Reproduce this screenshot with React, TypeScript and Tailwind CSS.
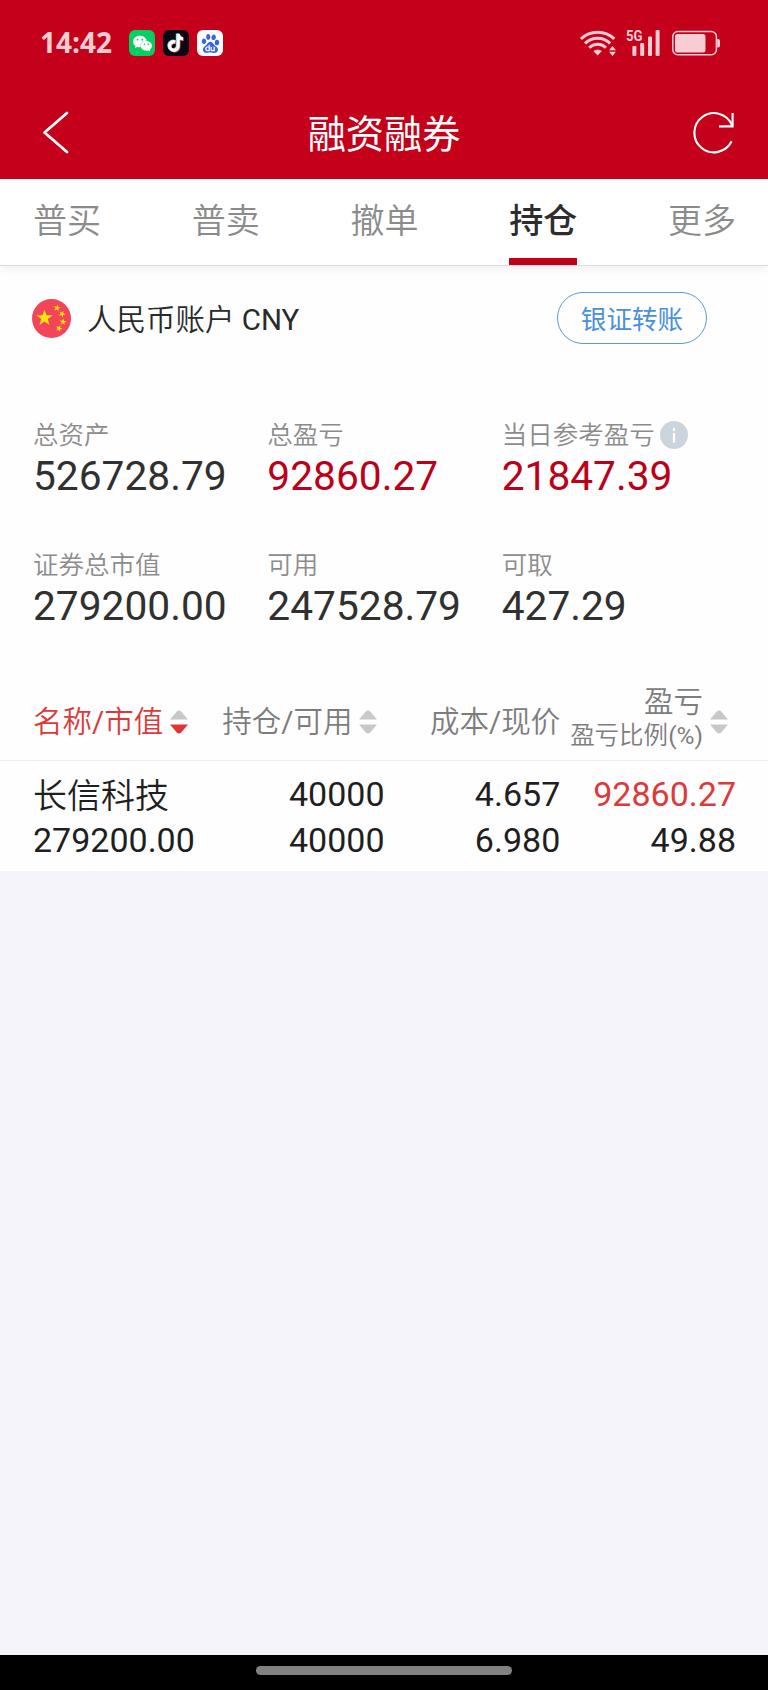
import React from 'react';
import { SiBaidu, SiWechat } from 'react-icons/si';

const tabs = ['普买', '普卖', '撤单', '持仓', '更多'];
const activeTab = '持仓';

const summary = [
  { label: '总资产', value: '526728.79' },
  { label: '总盈亏', value: '92860.27', gain: true },
  { label: '当日参考盈亏', value: '21847.39', gain: true, info: true },
  { label: '证券总市值', value: '279200.00' },
  { label: '可用', value: '247528.79' },
  { label: '可取', value: '427.29' },
];

function StatusBar() {
  const note = 'M12.400 12a4.300 4.300 0 1 0 2.800 4.200V4c.3 2.900 2.100 4.700 4.900 4.900';
  return (
    <div className="flex h-[86px] items-center pl-[40px] pr-[48px] text-[#f8ccd3]">
      <span className="w-[89px] pb-[2px] font-['Open_Sans'] text-[28px] leading-[40px] font-bold">14:42</span>
      <div className="flex gap-2">
        <span className="flex size-[26px] items-center justify-center rounded-[6px] bg-[#05cf62] text-white">
          <SiWechat size={19} />
        </span>
        <span className="flex size-[26px] items-center justify-center rounded-[6px] bg-[#0b0712]">
          <svg viewBox="0 0 26 26" className="size-[26px]">
            <g fill="none" strokeWidth="3.200">
              <path d={note} stroke="#3fe8e4" transform="translate(-.8 -.5)" />
              <path d={note} stroke="#f5365f" transform="translate(.7 .6)" />
              <path d={note} stroke="#fff" />
            </g>
          </svg>
        </span>
        <span className="flex size-[26px] items-center justify-center rounded-[6px] bg-white text-[#3566e0]">
          <SiBaidu size={19} />
        </span>
      </div>
      <svg viewBox="0 0 36 26" className="ml-auto h-[26px] w-[36px]">
        <g fill="none" stroke="currentColor" strokeWidth="3">
          <path d="M.9 8.900a24 24 0 0 1 33.400 0" />
          <path d="M5 13.400a18 18 0 0 1 25.200 0" />
          <path d="M9.200 17.700a12 12 0 0 1 16.800 0" />
        </g>
        <path d="M13.300 21q4.300-3.200 8.600 0l-4.300 4.500z" fill="currentColor" />
        <path d="M29 20.200l3.500-4.200 3.500 4.200zM29 21.800h7l-3.500 4.200z" fill="currentColor" />
      </svg>
      <div className="relative ml-[10px] h-[26px] w-[34px]">
        <span className="absolute top-[-1px] left-0 origin-left scale-x-[.85] font-['Roboto'] text-[15.500px] leading-[14px] font-bold">5G</span>
        <svg viewBox="0 0 34 26" className="size-full" fill="currentColor">
          <rect x="6.400" y="16" width="4" height="10" rx="1" />
          <rect x="14.200" y="13" width="4" height="13" rx="1" />
          <rect x="22" y="6.500" width="4" height="19.500" rx="1" />
          <rect x="29.600" y="0" width="4" height="26" rx="1" />
        </svg>
      </div>
      <svg viewBox="0 0 48 26" className="ml-[12px] h-[26px] w-[48px]">
        <rect x=".8" y="1.600" width="43.600" height="23.200" rx="5" fill="none" stroke="currentColor" strokeWidth="1.500" />
        <rect x="3" y="4" width="30.500" height="18.400" rx="2.500" fill="currentColor" />
        <path d="M45.200 9h.8q2 0 2 2v4.500q0 2-2 2h-.8z" fill="currentColor" />
      </svg>
    </div>
  );
}

function TitleBar() {
  return (
    <div className="flex h-[93px] items-center justify-between pr-[33px] pl-[42px] text-white">
      <svg viewBox="0 0 27 44" className="h-[44px] w-[27px]" fill="none" stroke="currentColor" strokeWidth="2.800" strokeLinecap="round" strokeLinejoin="round">
        <path d="M25 2L2.500 21.500 25 41" />
      </svg>
      <h1 className="ml-[8px] pt-[4px] text-[38.200px] leading-[48px] font-normal">融资融券</h1>
      <svg viewBox="0 0 44 44" className="size-[44px]" fill="none" stroke="currentColor" strokeWidth="2.100">
        <path d="M41.200 14.500A19.600 19.600 0 1 0 40.600 30.300" />
        <path d="M41.600 2v13.400H28" />
      </svg>
    </div>
  );
}

function Tabs() {
  return (
    <nav className="relative flex h-[87px] justify-between border-b border-[#dcdcdc] bg-white pr-[32px] pl-[33px] text-[34px] shadow-[0_3px_8px_rgba(0,0,0,0.06)]">
      {tabs.map((tab) =>
        tab === activeTab ? (
          <button key={tab} className="h-[86px] border-b-[7px] border-[#c1001a] leading-[84px] font-medium text-[#2d2d2d]">
            <span className="block h-[79px]">{tab}</span>
          </button>
        ) : (
          <button key={tab} className="h-[86px] leading-[84px] font-[350] text-[#8b8b8b]">
            <span className="block h-[86px]">{tab}</span>
          </button>
        ),
      )}
    </nav>
  );
}

function Flag() {
  const star = 'M0-10L2.350-3.240 9.510-3.090 3.800 1.240 5.880 8.090 0 4 -5.880 8.090 -3.800 1.240 -9.510-3.090 -2.350-3.240z';
  return (
    <svg viewBox="0 0 39 39" className="size-[39px]">
      <circle cx="19.500" cy="19.500" r="19.500" fill="#f2455a" />
      <g fill="#ffe40d">
        <path d={star} transform="translate(12.500 19) scale(.86)" />
        <path d={star} transform="translate(25 9) scale(.36) rotate(12)" />
        <path d={star} transform="translate(30 15) scale(.36) rotate(25)" />
        <path d={star} transform="translate(31 23) scale(.36) rotate(5)" />
        <path d={star} transform="translate(27 29.500) scale(.36) rotate(20)" />
      </g>
    </svg>
  );
}

function SortArrows({ descending = false }: { descending?: boolean }) {
  return (
    <svg viewBox="0 0 18 24" className="h-[24px] w-[18px] shrink-0">
      <path d="M0 9.500L7 1.200Q9-.4 11 1.200L18 9.500z" fill="#c8c8c8" />
      <path d="M0 14.500h18l-7 8.300Q9 24.400 7 22.800z" fill={descending ? '#e43333' : '#c8c8c8'} />
    </svg>
  );
}

function Account() {
  return (
    <section className="flex h-[104px] items-center pr-[61px] pl-[32px]">
      <Flag />
      <span className="ml-[16px] pt-[4px] text-[29.500px] leading-[40px] font-[350] text-[#2a2a2a]">
        人民币账户 <span className="font-normal">CNY</span>
      </span>
      <button className="ml-auto h-[52px] w-[150px] rounded-full border-[1.500px] border-[#5b9bd3] pt-[3px] text-[25.600px] leading-[46px] text-[#4a90d9]">银证转账</button>
    </section>
  );
}

function Summary() {
  return (
    <section className="grid h-[300px] auto-rows-[130px] grid-cols-3 pt-[47px] pr-[32px] pl-[33px]">
      {summary.map((item) => (
        <div key={item.label}>
          <div className="flex h-[36px] items-center gap-[5px] text-[25.500px] leading-[36px] font-[350] text-[#8c8c8c]">
            {item.label}
            {item.info && (
              <svg viewBox="0 0 28 28" className="size-[28px]">
                <circle cx="14" cy="14" r="14" fill="#ccd5dc" />
                <path d="M14 7v3M14 12v9.500" stroke="#fff" strokeWidth="2.200" />
              </svg>
            )}
          </div>
          <div className={item.gain ? 'text-[40.700px] leading-[46px] text-[#bd0019]' : 'text-[40.700px] leading-[46px] text-[#303030]'}>{item.value}</div>
        </div>
      ))}
    </section>
  );
}

function PairLabel({ first, second }: { first: string; second: string }) {
  return (
    <span>
      {first}
      <span className="font-normal">/</span>
      {second}
    </span>
  );
}

function Holdings() {
  return (
    <section>
      <div className="grid h-[91px] grid-cols-4 border-b border-[#ececec] pt-[13px] pr-[32px] pl-[33px] text-[29.500px] leading-[36px] font-[350] whitespace-nowrap text-[#7d7d7d]">
        <div className="flex items-center gap-[7px] text-[#dc3a3a]">
          <PairLabel first="名称" second="市值" />
          <SortArrows descending />
        </div>
        <div className="flex items-center justify-end gap-[6px] pr-[8px]">
          <PairLabel first="持仓" second="可用" />
          <SortArrows />
        </div>
        <div className="flex items-center justify-end">
          <PairLabel first="成本" second="现价" />
        </div>
        <div className="flex items-center justify-end gap-[7px] pr-[8px]">
          <div className="-mt-[6px] text-right">
            <div className="leading-[34px]">盈亏</div>
            <div className="text-[24.500px] leading-[33px]">
              盈亏比例<span className="font-normal">(%)</span>
            </div>
          </div>
          <SortArrows />
        </div>
      </div>
      <div className="grid h-[110px] grid-cols-4 content-start pt-[10px] pr-[32px] pl-[33px] text-right text-[34px] leading-[46px] text-[#1f1f1f]">
        <div className="h-[46px] text-left leading-[50px] font-[350]">长信科技</div>
        <div>40000</div>
        <div>4.657</div>
        <div className="text-[#dc3a3a]">92860.27</div>
        <div className="text-left">279200.00</div>
        <div>40000</div>
        <div>6.980</div>
        <div>49.88</div>
      </div>
    </section>
  );
}

export default function App() {
  return (
    <div className="flex h-[1690px] w-[768px] flex-col overflow-hidden bg-[#f4f4fa] font-['Roboto','Noto_Sans_CJK_SC',sans-serif]">
      <header className="bg-[#c4001a]">
        <StatusBar />
        <TitleBar />
      </header>
      <Tabs />
      <main className="bg-[#fefefe]">
        <Account />
        <Summary />
        <Holdings />
      </main>
      <footer className="mt-auto flex h-[35px] justify-center bg-black pt-[11px]">
        <div className="h-[9px] w-[256px] rounded-full bg-[#828282]" />
      </footer>
    </div>
  );
}
